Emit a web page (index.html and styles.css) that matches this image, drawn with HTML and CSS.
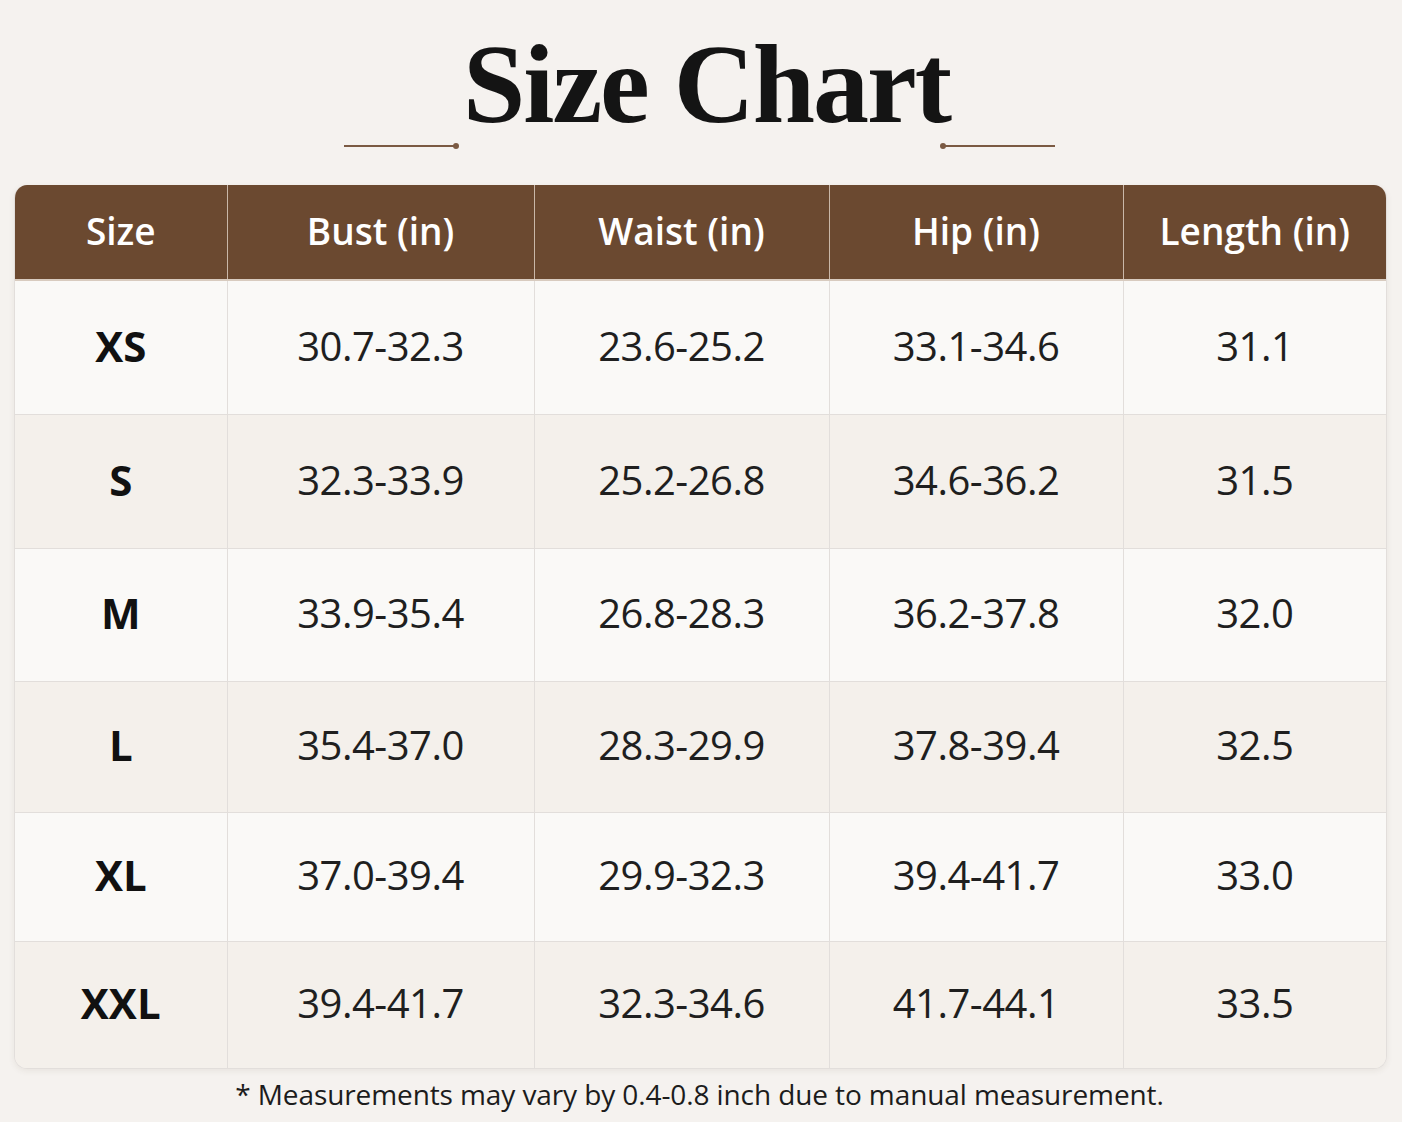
FILE: index.html
```html
<!DOCTYPE html>
<html lang="en">
<head>
<meta charset="utf-8">
<title>Size Chart</title>
<link rel="stylesheet" href="styles.css">
</head>
<body>
<div class="page">
  <h1 class="title">Size Chart</h1>
  <div class="rule">
    <span class="line line-left"></span>
    <span class="rule-gap"></span>
    <span class="line line-right"></span>
  </div>
  <div class="card">
    <table class="chart">
      <colgroup>
        <col class="c1"><col class="c2"><col class="c3"><col class="c4"><col class="c5">
      </colgroup>
      <thead>
        <tr><th>Size</th><th>Bust (in)</th><th>Waist (in)</th><th>Hip (in)</th><th>Length (in)</th></tr>
      </thead>
      <tbody>
        <tr class="r1"><td class="size">XS</td><td>30.7-32.3</td><td>23.6-25.2</td><td>33.1-34.6</td><td>31.1</td></tr>
        <tr class="r2"><td class="size">S</td><td>32.3-33.9</td><td>25.2-26.8</td><td>34.6-36.2</td><td>31.5</td></tr>
        <tr class="r3"><td class="size">M</td><td>33.9-35.4</td><td>26.8-28.3</td><td>36.2-37.8</td><td>32.0</td></tr>
        <tr class="r4"><td class="size">L</td><td>35.4-37.0</td><td>28.3-29.9</td><td>37.8-39.4</td><td>32.5</td></tr>
        <tr class="r5"><td class="size">XL</td><td>37.0-39.4</td><td>29.9-32.3</td><td>39.4-41.7</td><td>33.0</td></tr>
        <tr class="r6"><td class="size">XXL</td><td>39.4-41.7</td><td>32.3-34.6</td><td>41.7-44.1</td><td>33.5</td></tr>
      </tbody>
    </table>
  </div>
  <p class="note">* Measurements may vary by 0.4-0.8 inch due to manual measurement.</p>
</div>
</body>
</html>
```

FILE: styles.css
```css
html, body {
  margin: 0;
  padding: 0;
  background: #f5f2ef;
}
body {
  width: 1402px;
  height: 1122px;
  overflow: hidden;
}
.page {
  padding: 28px 17px 0 14px;
  display: flex;
  flex-direction: column;
  align-items: stretch;
}
.title {
  margin: 0;
  padding-left: 14px;
  font-family: "Liberation Serif", "Times New Roman", serif;
  font-weight: 700;
  font-size: 112px;
  line-height: 112px;
  letter-spacing: -2px;
  text-align: center;
  color: #141414;
}
.rule {
  display: flex;
  justify-content: center;
  align-items: center;
  height: 10px;
  margin-top: 1px;
}
.rule-gap {
  width: 485px;
}
.line {
  position: relative;
  width: 113px;
  height: 2px;
  background: #7b5a43;
}
.line::after {
  content: "";
  position: absolute;
  top: -2px;
  width: 6px;
  height: 6px;
  border-radius: 50%;
  background: #7b5a43;
}
.line-left::after { right: -2px; }
.line-right::after { left: -2px; }

.card {
  margin-top: 34px;
  border-radius: 13px;
  overflow: hidden;
  border: 1px solid #e2dedb;
  border-top: none;
  box-shadow: 0 2px 6px rgba(80, 60, 40, 0.08);
  width: 1371px;
}
.chart {
  width: 1371px;
  border-collapse: collapse;
  table-layout: fixed;
  font-family: "Open Sans", "Noto Sans", sans-serif;
}
.c1 { width: 212px; }
.c2 { width: 307px; }
.c3 { width: 295px; }
.c4 { width: 294px; }
.c5 { width: 263px; }

.chart th {
  height: 90px;
  padding: 0 0 4px 0;
  background: #6b4930;
  color: #ffffff;
  font-weight: 600;
  font-size: 37px;
  letter-spacing: 0;
  border-left: 1px solid #c9b7a8;
  border-bottom: 2px solid #d8cbbf;
}
.chart th:first-child { border-left: none; }

.chart td {
  padding: 0 0 5px 0;
  text-align: center;
  font-size: 40px;
  font-weight: 400;
  letter-spacing: -0.5px;
  color: #1f1f1f;
  border-left: 1px solid #e2dedb;
  border-top: 1px solid #e2dedb;
}
.chart td:first-child { border-left: none; }
.chart tbody tr:first-child td { border-top: none; }

.chart td.size {
  font-weight: 700;
  font-size: 42px;
  letter-spacing: 0;
  color: #111111;
}
.r1 td { height: 128px; background: #faf9f7; }
.r2 td { height: 128px; background: #f4f0eb; }
.r3 td { height: 127px; background: #faf9f7; }
.r4 td { height: 125px; background: #f4f0eb; }
.r5 td { height: 123px; background: #faf9f7; }
.r6 td { height: 121px; background: #f4f0eb; }

.note {
  margin: 6px 0 0 0;
  text-align: center;
  font-family: "Open Sans", "Noto Sans", sans-serif;
  font-size: 28px;
  letter-spacing: -0.1px;
  color: #1c1c1c;
}
```
